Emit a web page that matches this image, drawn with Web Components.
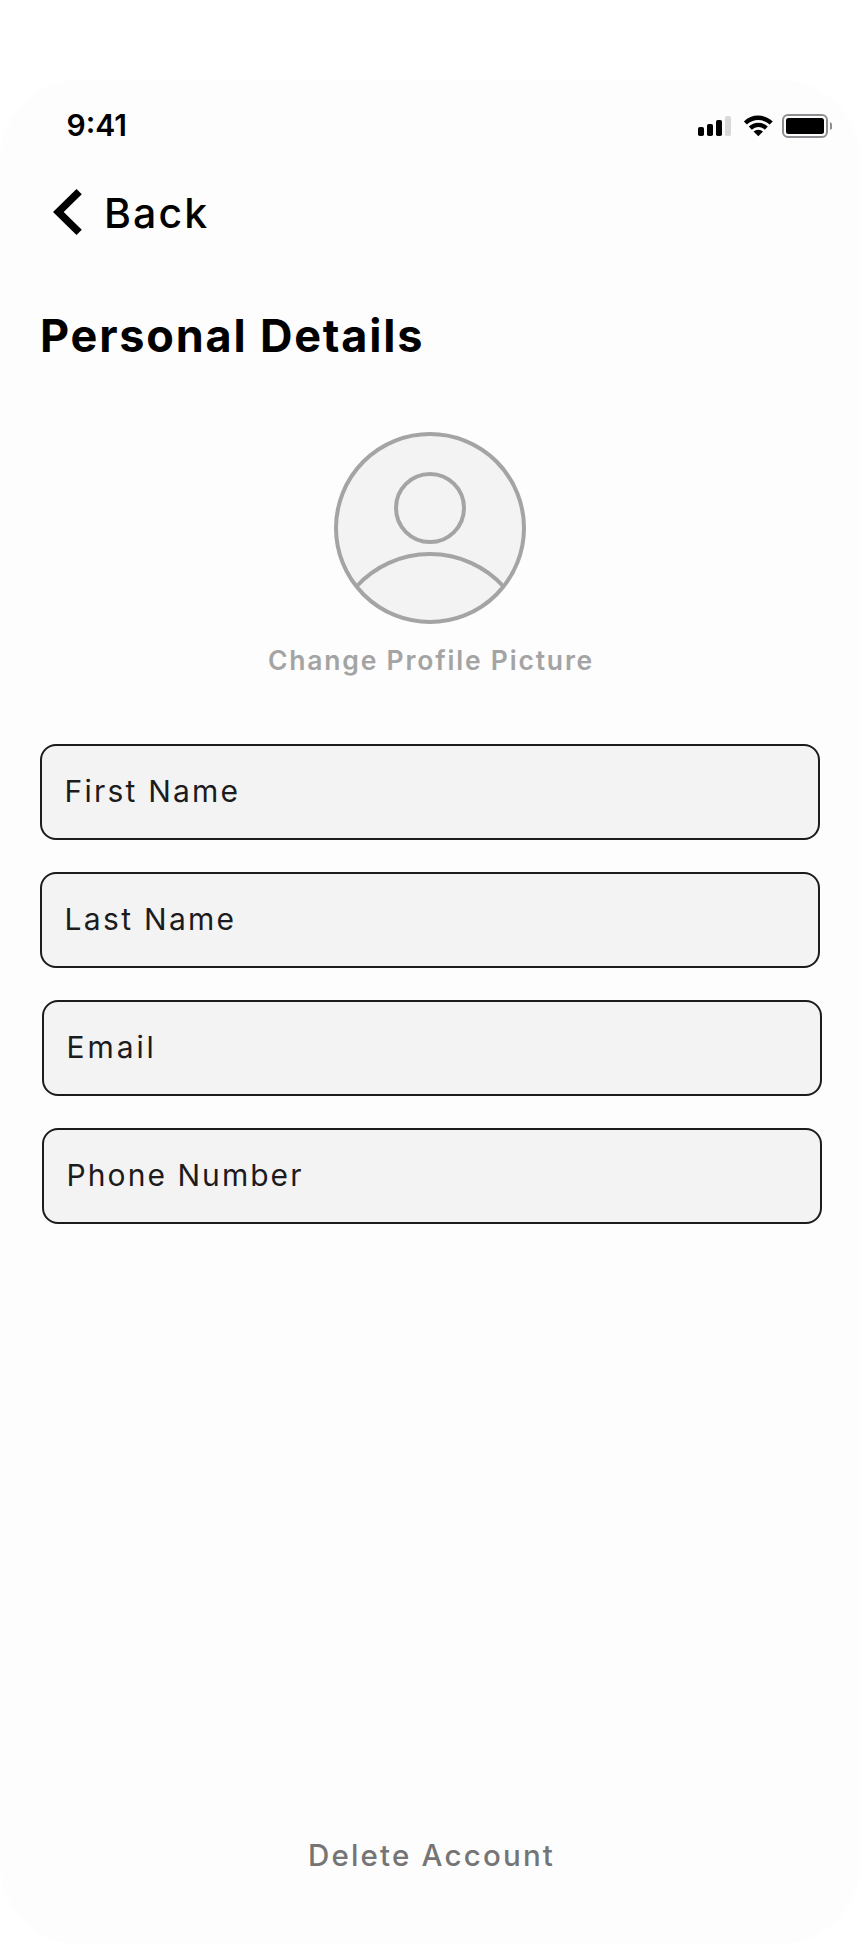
<!DOCTYPE html>
<html lang="en">
<head>
<meta charset="utf-8">
<title>Personal Details</title>
<style>
  body {
    margin: 0;
    background: #fff;
    font-family: Inter, "Liberation Sans", sans-serif;
  }
</style>
</head>
<body>
<phone-screen>
  <status-bar slot="top">9:41</status-bar>
  <back-link slot="top">Back</back-link>
  <page-title>Personal Details</page-title>
  <profile-picture>Change Profile Picture</profile-picture>
  <details-form>
    <text-field style="--spacing: 2.2px">First Name</text-field>
    <text-field style="--spacing: 2.3px">Last Name</text-field>
    <text-field shifted style="--spacing: 2.9px">Email</text-field>
    <text-field shifted style="--spacing: 2.05px">Phone Number</text-field>
  </details-form>
  <delete-link slot="bottom">Delete Account</delete-link>
</phone-screen>

<script>
class Base extends HTMLElement {
  constructor() {
    super();

    const template = document.createElement('template');
    template.innerHTML = this.constructor.template;

    const shadow = this.attachShadow({ mode: 'open' });
    shadow.append(template.content.cloneNode(true));
  }
}

class PhoneScreen extends Base {}

PhoneScreen.template = `
  <slot name="top"></slot>
  <main><slot></slot></main>
  <slot name="bottom"></slot>
  <style>
    :host {
      display: flex;
      flex-direction: column;
      box-sizing: border-box;
      height: 1864px;
      margin-top: 80px;
      padding: 25px 0 69px;
      border-radius: 80px;
      background: #fdfdfd;
    }

    main {
      flex: 1;
      padding: 69px 40px 0;
    }
  </style>
`;

class StatusBar extends Base {}

StatusBar.template = `
  <span><slot></slot></span>
  <svg width="134" height="40" viewBox="698 105 134 40">
    <rect x="698" y="127" width="6" height="9" rx="1.8"/>
    <rect x="707" y="124" width="6" height="12" rx="1.8"/>
    <rect x="716" y="120" width="6" height="16" rx="1.8"/>
    <rect x="725" y="116" width="6" height="20" rx="1.8" fill="#d9d9d9"/>
    <g fill="none" stroke="#000" stroke-width="4.4">
      <path d="M745.4 123a18.6 18.6 0 0 1 25.8 0"/>
      <path d="M750.3 128.1a11.6 11.6 0 0 1 16 0"/>
    </g>
    <path d="M753.6 131.6a6.8 6.8 0 0 1 9.4 0l-4.7 4.6z"/>
    <rect x="783" y="115" width="44" height="22" rx="5" fill="none" stroke="#8e8e92" stroke-width="2"/>
    <rect x="786" y="118" width="38" height="16" rx="2.5"/>
    <path d="M830 122a4.4 4.4 0 0 1 0 8z" fill="#8e8e92"/>
  </svg>
  <style>
    :host {
      display: flex;
      justify-content: space-between;
      height: 40px;
      padding: 0 28px 0 66.5px;
      font-size: 30px;
      font-weight: 600;
      line-height: 40px;
    }
  </style>
`;

class BackLink extends Base {}

BackLink.template = `
  <svg width="29" height="46" viewBox="-0.5 0 29 46">
    <path d="M23 0 28.3 5.2 10.2 23 28.3 40.8 23 46 -.5 23z"/>
  </svg>
  <span><slot></slot></span>
  <style>
    :host {
      display: flex;
      align-items: center;
      gap: 22px;
      height: 50px;
      margin-top: 42px;
      padding-left: 53px;
      font-size: 41px;
      font-weight: 500;
      letter-spacing: 2.1px;
    }

    span {
      padding-top: 1px;
    }
  </style>
`;

class PageTitle extends Base {}

PageTitle.template = `
  <slot></slot>
  <style>
    :host {
      display: block;
      font-size: 45px;
      font-weight: 650;
      line-height: 60px;
      letter-spacing: 1.8px;
      white-space: nowrap;
    }
  </style>
`;

class ProfilePicture extends Base {}

ProfilePicture.template = `
  <svg width="192" height="192" viewBox="0 0 192 192">
    <g fill="#f3f3f3" stroke="#a4a4a4" stroke-width="4">
      <circle cx="96" cy="96" r="94"/>
      <circle cx="96" cy="76" r="34"/>
      <path d="M23 154a99.5 99.5 0 0 1 146 0" fill="none"/>
    </g>
  </svg>
  <span><slot></slot></span>
  <style>
    :host {
      display: flex;
      flex-direction: column;
      align-items: center;
      gap: 18px;
      margin-top: 66px;
      color: #a4a4a4;
      font-size: 26.5px;
      font-weight: 600;
      line-height: 36px;
      letter-spacing: 1.8px;
    }

    span {
      padding-left: 2px;
    }
  </style>
`;

class DetailsForm extends Base {}

DetailsForm.template = `
  <slot></slot>
  <style>
    :host {
      display: flex;
      flex-direction: column;
      gap: 32px;
      margin-top: 66px;
    }
  </style>
`;

class TextField extends Base {}

TextField.template = `
  <slot></slot>
  <style>
    :host {
      display: flex;
      align-items: center;
      box-sizing: border-box;
      height: 96px;
      padding: 0 0 2px 22.6px;
      border: 2px solid #1c1b1d;
      border-radius: 16px;
      background: #f3f3f3;
      color: #1c1b1d;
      font-size: 30px;
      letter-spacing: var(--spacing);
    }

    :host([shifted]) {
      margin: 0 -2px 0 2px;
    }
  </style>
`;

class DeleteLink extends Base {}

DeleteLink.template = `
  <slot></slot>
  <style>
    :host {
      display: block;
      padding-left: 3px;
      color: #757575;
      font-size: 29.5px;
      font-weight: 500;
      line-height: 40px;
      letter-spacing: 2.2px;
      text-align: center;
    }
  </style>
`;

customElements.define('phone-screen', PhoneScreen);
customElements.define('status-bar', StatusBar);
customElements.define('back-link', BackLink);
customElements.define('page-title', PageTitle);
customElements.define('profile-picture', ProfilePicture);
customElements.define('details-form', DetailsForm);
customElements.define('text-field', TextField);
customElements.define('delete-link', DeleteLink);
</script>
</body>
</html>
